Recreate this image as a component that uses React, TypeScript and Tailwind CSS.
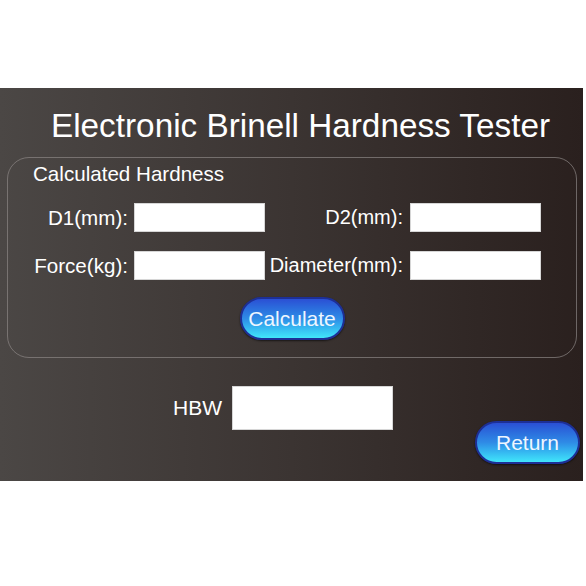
export default function App() {
  const font = "font-['Liberation_Sans',Arial,sans-serif]";
  const label = 'leading-[29px] text-white text-right whitespace-nowrap';
  const input = 'h-[29px] w-[131px] bg-white border border-[#d6d6d6]';
  const pill =
    'h-[43px] w-[105px] rounded-full border-2 border-[#1d2f96] bg-gradient-to-b from-[#2b4fd4] via-[#2f8be6] to-[#42e6fa] text-[21px] text-[#eef6ff] shadow-[0_1px_2px_rgba(0,0,0,0.6)]';

  return (
    <div className={`w-[586px] h-[586px] bg-white ${font}`}>
      <div className="h-[88px]" />
      <div className="w-[583px] h-[393px] bg-gradient-to-r from-[#4b4745] via-[#3b3432] to-[#2a201e] flex flex-col">
        <h1 className="pt-[20px] pl-[51px] text-[33.3px] leading-[36px] text-white whitespace-nowrap">
          Electronic Brinell Hardness Tester
        </h1>

        <div className="mt-[13px] ml-[7px] w-[570px] h-[201px] rounded-[22px] border border-[#8c8684]/70 pt-[5px] pl-[25px]">
          <div className="text-[20.6px] leading-[22px] text-white">Calculated Hardness</div>
          <div className="mt-[18px] grid grid-cols-[101px_131px_145px_131px] gap-y-[19px] items-center">
            <div className={label + ' text-[20.6px] pr-[6px]'}>D1(mm):</div>
            <div className={input} />
            <div className={label + ' text-[20px] pr-[7px]'}>D2(mm):</div>
            <div className={input} />
            <div className={label + ' text-[20.6px] pr-[6px]'}>Force(kg):</div>
            <div className={input} />
            <div className={label + ' text-[20px] pr-[7px]'}>Diameter(mm):</div>
            <div className={input} />
          </div>
          <div className="mt-[17px] flex justify-center pr-[25px]">
            <button className={pill}>Calculate</button>
          </div>
        </div>

        <div className="mt-[28px] flex">
          <div className="flex items-center pl-[173px] h-[44px]">
            <span className="text-[21px] text-white w-[59px]">HBW</span>
            <div className="h-[44px] w-[161px] bg-white border border-[#d6d6d6]" />
          </div>
          <div className="flex-1" />
          <button className={pill + ' mt-[35px] mr-[3px]'}>Return</button>
        </div>
      </div>
    </div>
  );
}
